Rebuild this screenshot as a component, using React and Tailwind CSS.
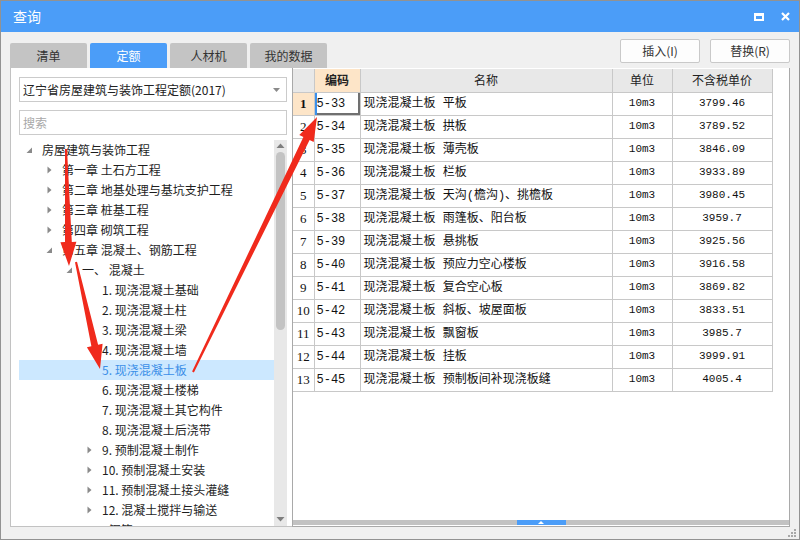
import { useState } from 'react'

const UI = "font-['Noto_Sans_CJK_SC',sans-serif]"

const TABS = ['清单', '定额', '人材机', '我的数据']

const TREE = [
  [0, 'down', '房屋建筑与装饰工程'],
  [1, 'right', '第一章 土石方工程'],
  [1, 'right', '第二章 地基处理与基坑支护工程'],
  [1, 'right', '第三章 桩基工程'],
  [1, 'right', '第四章 砌筑工程'],
  [1, 'down', '第五章 混凝土、钢筋工程'],
  [2, 'down', '一、 混凝土'],
  [3, null, '1. 现浇混凝土基础'],
  [3, null, '2. 现浇混凝土柱'],
  [3, null, '3. 现浇混凝土梁'],
  [3, null, '4. 现浇混凝土墙'],
  [3, null, '5. 现浇混凝土板'],
  [3, null, '6. 现浇混凝土楼梯'],
  [3, null, '7. 现浇混凝土其它构件'],
  [3, null, '8. 现浇混凝土后浇带'],
  [3, 'right', '9. 预制混凝土制作'],
  [3, 'right', '10. 预制混凝土安装'],
  [3, 'right', '11. 预制混凝土接头灌缝'],
  [3, 'right', '12. 混凝土搅拌与输送'],
  [2, 'down', '二、 钢筋'],
]

const ROWS = [
  ['5-33', '平板', '3799.46'],
  ['5-34', '拱板', '3789.52'],
  ['5-35', '薄壳板', '3846.09'],
  ['5-36', '栏板', '3933.89'],
  ['5-37', '天沟(檐沟)、挑檐板', '3980.45'],
  ['5-38', '雨篷板、阳台板', '3959.7'],
  ['5-39', '悬挑板', '3925.56'],
  ['5-40', '预应力空心楼板', '3916.58'],
  ['5-41', '复合空心板', '3869.82'],
  ['5-42', '斜板、坡屋面板', '3833.51'],
  ['5-43', '飘窗板', '3985.7'],
  ['5-44', '挂板', '3999.91'],
  ['5-45', '预制板间补现浇板缝', '4005.4'],
]

function Toggle({ dir }) {
  if (dir === 'down')
    return (
      <svg width="8" height="8" viewBox="0 0 8 8">
        <path d="M7 1.5V7H1.5Z" fill="#8a8a8a" />
      </svg>
    )
  if (dir === 'right')
    return (
      <svg width="8" height="8" viewBox="0 0 8 8">
        <path d="M2.5 0.5L6.5 4L2.5 7.5Z" fill="#8a8a8a" />
      </svg>
    )
  return <span className="w-[8px]" />
}

// red annotation arrow drawn by the screenshot tool
function Arrow({ x1, y1, x2, y2 }) {
  const dx = x2 - x1
  const dy = y2 - y1
  const len = Math.hypot(dx, dy)
  const ux = dx / len
  const uy = dy / len
  const nx = -uy
  const ny = ux
  const head = 24
  const bx = x2 - ux * head
  const by = y2 - uy * head
  const p = (x, y) => `${x.toFixed(1)},${y.toFixed(1)}`
  const pts = [
    p(x1 + nx * 1, y1 + ny * 1),
    p(bx + nx * 3.4, by + ny * 3.4),
    p(bx + nx * 8, by + ny * 8),
    p(x2, y2),
    p(bx - nx * 8, by - ny * 8),
    p(bx - nx * 3.4, by - ny * 3.4),
    p(x1 - nx * 1, y1 - ny * 1),
  ]
  return <polygon points={pts.join(' ')} fill="#f02a1c" />
}

export default function App() {
  const [tab, setTab] = useState('定额')
  const [selected, setSelected] = useState(11)

  return (
    <div className={`relative flex h-[540px] w-[800px] flex-col overflow-hidden border border-[#929292] bg-[#f0f0f0] ${UI}`}>
      <div className="flex h-[31px] shrink-0 items-center justify-between bg-[#4b9df8] pl-[12px] pr-[9px] text-white">
        <span className="text-[14px]">查询</span>
        <div className="flex items-center gap-[17px]">
          <span className="h-[8px] w-[10px] border-x-2 border-b-2 border-t-[3px] border-white" />
          <svg width="9" height="9" viewBox="0 0 9 9">
            <path d="M1 1L8 8M8 1L1 8" stroke="#fff" strokeWidth="2.2" />
          </svg>
        </div>
      </div>

      <div className="flex h-[36px] shrink-0 justify-between pl-[9px] pr-[9px]">
        <div className="flex gap-[3px] self-end">
          {TABS.map((t) => (
            <button
              key={t}
              onClick={() => setTab(t)}
              className={`h-[25px] w-[77px] rounded-t-[2px] text-[12px] ${
                tab === t ? 'bg-[#4b9df8] text-white' : 'bg-[#c4c4c4] text-[#333]'
              }`}
            >
              {t}
            </button>
          ))}
        </div>
        <div className="mt-[7px] flex gap-[10px] self-start">
          {['插入(I)', '替换(R)'].map((b) => (
            <button
              key={b}
              className="h-[24px] w-[80px] rounded-[2px] border border-[#c9c9c9] bg-[#fdfdfd] text-[12px] text-[#333]"
            >
              {b}
            </button>
          ))}
        </div>
      </div>

      <div className="flex h-[459px] shrink-0 pl-[9px] pr-[9px]">
        {/* left tree panel */}
        <div className="flex w-[282px] flex-col border-b border-l border-[#c2c2c2] bg-white pl-[8px] pr-[5px] pt-[9px]">
          <div className="flex h-[25px] items-center justify-between border border-[#cbcbcb] pl-[3px] pr-[6px] text-[12px] text-[#222]">
            <span>辽宁省房屋建筑与装饰工程定额(2017)</span>
            <svg width="7" height="4" viewBox="0 0 7 4">
              <path d="M0 0H7L3.5 4Z" fill="#8a8a8a" />
            </svg>
          </div>
          <div className="mt-[8px] flex h-[25px] items-center border border-[#cbcbcb] pl-[3px] text-[12px] text-[#a8a8a8]">
            搜索
          </div>
          <div className="mt-[5px] flex min-h-0 flex-1">
            <div className="min-w-0 flex-1 overflow-hidden">
              {TREE.map(([lvl, dir, label], i) => (
                <div
                  key={i}
                  onClick={() => setSelected(i)}
                  style={{ paddingLeft: 6 + lvl * 20 }}
                  className={`flex h-[20px] items-center whitespace-nowrap text-[12px] ${
                    selected === i ? 'bg-[#cce8ff] text-[#3b8fe8]' : 'text-[#1e1e1e]'
                  }`}
                >
                  <span className="mr-[9px] flex w-[8px] justify-center">
                    <Toggle dir={dir} />
                  </span>
                  {label}
                </div>
              ))}
            </div>
            <div className="flex w-[13px] flex-col items-center bg-[#e8e8e8] pb-[2px]">
              <svg width="9" height="12" viewBox="0 0 9 12" className="shrink-0">
                <path d="M0.5 8H8.5L4.5 3.5Z" fill="#7e7e7e" />
              </svg>
              <div className="h-[178px] w-[9px] rounded-full bg-[#c3c3c3]" />
              <div className="flex-1" />
              <svg width="9" height="10" viewBox="0 0 9 10" className="shrink-0">
                <path d="M0.5 3H8.5L4.5 7.5Z" fill="#7e7e7e" />
              </svg>
            </div>
          </div>
        </div>

        {/* right grid panel */}
        <div className="flex flex-1 flex-col border-b border-l border-r border-[#a9a9a9] bg-white">
          <div className="flex-1 pt-[1px]">
            <table className="table-fixed border-collapse text-[12px] text-[#111]">
              <colgroup>
                <col className="w-[21px]" />
                <col className="w-[46px]" />
                <col className="w-[252px]" />
                <col className="w-[60px]" />
                <col className="w-[100px]" />
              </colgroup>
              <thead>
                <tr className="h-[23px] bg-[#e8e8e8] text-[12px] font-normal text-[#222]">
                  <th className="border border-l-0 border-t-0 border-[#c8c8c8]" />
                  <th className="border border-t-0 border-[#c8c8c8] bg-[#fde5c8] font-bold">编码</th>
                  <th className="border border-t-0 border-[#c8c8c8] font-normal">名称</th>
                  <th className="border border-t-0 border-[#c8c8c8] font-normal">单位</th>
                  <th className="border border-t-0 border-[#c8c8c8] font-normal">不含税单价</th>
                </tr>
              </thead>
              <tbody className="font-['Liberation_Mono','Noto_Sans_CJK_SC',monospace]">
                {ROWS.map(([code, name, price], i) => (
                  <tr key={code} className="h-[23px]">
                    <td
                      className={`border border-l-0 border-[#c8c8c8] text-center font-['Liberation_Serif',serif] text-[13px] ${
                        i === 0 ? 'bg-[#fde5c8] font-bold' : ''
                      }`}
                    >
                      {i + 1}
                    </td>
                    <td
                      className={`border border-[#c8c8c8] pl-[2px] text-[12px] ${
                        i === 0 ? 'shadow-[inset_2px_0_0_#3a90ec,inset_-2px_-2px_0_#707070]' : ''
                      }`}
                    >
                      {code}
                    </td>
                    <td className="whitespace-nowrap border border-[#c8c8c8] pl-[3px] text-[12px]">
                      现浇混凝土板 {name}
                    </td>
                    <td className="border border-[#c8c8c8] text-center text-[11px]">10m3</td>
                    <td className="border border-[#c8c8c8] text-center text-[11px]">{price}</td>
                  </tr>
                ))}
              </tbody>
            </table>
          </div>
          <div className="flex h-[5px] justify-center bg-[#c2c2c2]">
            <div className="flex w-[49px] items-center justify-center bg-[#4b9df8]">
              <svg width="6" height="3" viewBox="0 0 6 3">
                <path d="M0 3H6L3 0Z" fill="#fff" />
              </svg>
            </div>
          </div>
          <div className="h-[1px]" />
        </div>
      </div>

      <div className="flex flex-1 items-end justify-end pb-[2px] pr-[3px]">
        <svg width="8" height="8" viewBox="0 0 8 8">
          <g fill="#a8a8a8">
            <rect x="6" y="0" width="2" height="2" />
            <rect x="3" y="3" width="2" height="2" />
            <rect x="6" y="3" width="2" height="2" />
            <rect x="0" y="6" width="2" height="2" />
            <rect x="3" y="6" width="2" height="2" />
            <rect x="6" y="6" width="2" height="2" />
          </g>
        </svg>
      </div>

      <svg className="pointer-events-none absolute left-[-1px] top-[-1px]" width="800" height="540">
        <Arrow x1={66} y1={149} x2={69} y2={266} />
        <Arrow x1={76} y1={262} x2={100} y2={369} />
        <Arrow x1={193} y1={372} x2={317} y2={117} />
      </svg>
    </div>
  )
}
